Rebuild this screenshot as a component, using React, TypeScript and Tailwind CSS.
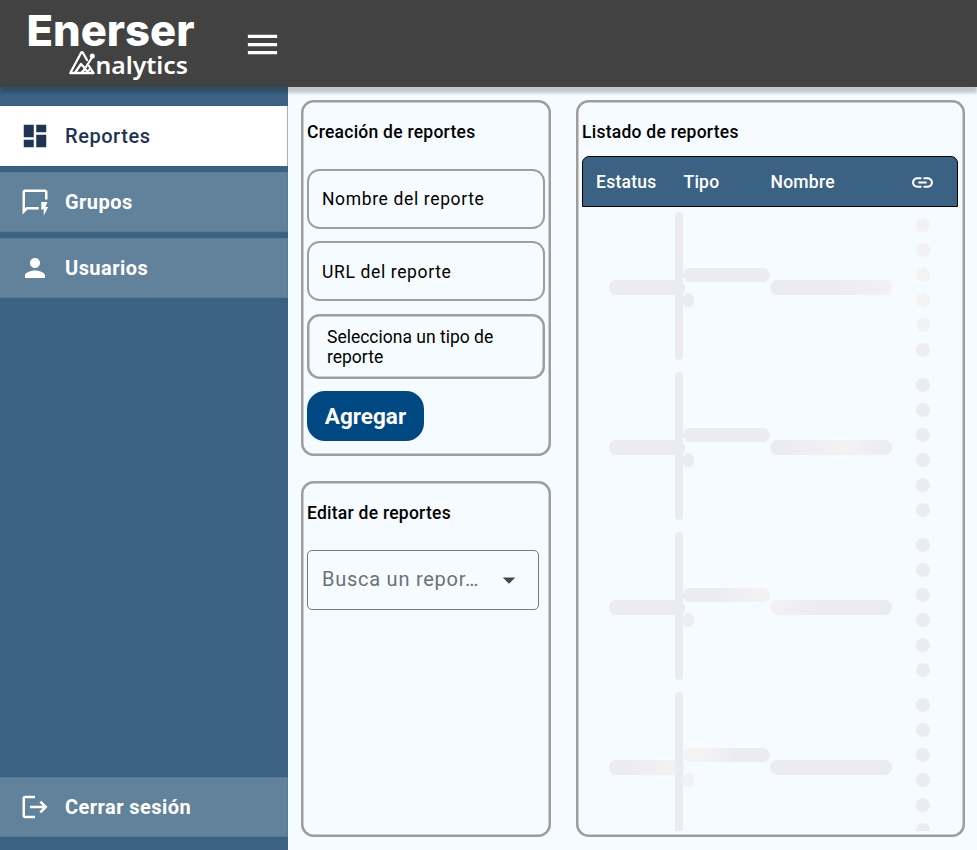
import type { ReactNode } from 'react';
import {
  MdArrowDropDown,
  MdDashboard,
  MdLink,
  MdLogout,
  MdMenu,
  MdOutlineQuickreply,
  MdPerson,
} from 'react-icons/md';

function Logo() {
  return (
    <svg width="180" height="87" viewBox="0 0 180 87" fill="#fff" className="overflow-visible">
      <text x="1.500" y="45.500" fontFamily="Inter, sans-serif" fontWeight="800" fontSize="43" textLength="168" lengthAdjust="spacingAndGlyphs">
        Enerser
      </text>
      <g fill="none" stroke="#fff" strokeWidth="2.300" strokeLinejoin="round" strokeLinecap="round">
        <path d="M68.500 73H45.300L56 53q1-1.500 2 0l4 7M64 66l4.500 7" />
        <path d="M50.500 72l5.500-8 4 4.500 7-11M57 72l3-3 2.500 2.500 2-2" />
      </g>
      <circle cx="67.300" cy="56" r="2.500" />
      <text x="70.500" y="73.500" fontFamily="'Noto Sans', sans-serif" fontWeight="600" fontSize="24" textLength="92.500" lengthAdjust="spacingAndGlyphs">
        nalytics
      </text>
    </svg>
  );
}

function NavItem({ icon, label, active = false }: { icon: ReactNode; label: string; active?: boolean }) {
  return (
    <div
      className={
        active
          ? 'flex h-[60px] items-center gap-[15px] border-r border-[#9fb1c0] bg-white pl-5 text-[20px] font-medium tracking-[0.55px] text-[#1f3354]'
          : 'flex h-[60px] items-center gap-[15px] border border-l-0 border-[#577b95] bg-[#62829b] pl-5 text-[20px] font-bold tracking-[0.45px] text-white'
      }
    >
      {icon}
      <span>{label}</span>
    </div>
  );
}

const CARD = 'rounded-[12.5px] shadow-[inset_0_0_0_2.5px_#9e9e9e]';
const HEADING = 'text-[17.5px] font-medium leading-[26px] tracking-[0.25px]';
const INPUT = 'flex h-[60px] items-center rounded-[12.5px] border-2 border-[#9e9e9e] pl-[13px] text-[17.5px] tracking-[0.64px]';

interface RowTone {
  status: string;
  line: string;
  type: string;
  small: string;
  name: string;
  dots: string[];
}

const BASE = 'bg-[#ebebf3]';
const WARM = 'bg-[#f2f1f3]';

const rows: RowTone[] = [
  { status: BASE, line: 'bg-[#ecebf0]', type: BASE, small: BASE, name: 'bg-linear-to-r from-[#ebebf4] from-50% to-[#f3f0f4]', dots: [WARM, WARM, 'bg-[#f4f3f3]', 'bg-[#f4f3f3]', WARM, 'bg-[#eeedf2]'] },
  { status: BASE, line: BASE, type: BASE, small: BASE, name: 'bg-linear-to-r from-[#ebebf4] from-10% via-[#f3f2f3] via-60% to-[#ebebf4]', dots: [BASE, BASE, BASE, BASE, BASE, BASE] },
  { status: BASE, line: BASE, type: 'bg-linear-to-r from-[#ebebf4] from-35% to-[#f4f3f3]', small: 'bg-[#eeedf3]', name: 'bg-linear-to-r from-[#f3f2f3] to-[#ebebf4] to-40%', dots: [BASE, BASE, BASE, BASE, BASE, BASE] },
  { status: 'bg-linear-to-r from-[#ebebf3] from-20% to-[#f4f3f3]', line: BASE, type: 'bg-linear-to-r from-[#f4f3f3] from-20% to-[#ebebf4] to-60%', small: 'bg-[#f2f1f3]', name: BASE, dots: [BASE, BASE, BASE, BASE, BASE, BASE] },
];

function SkeletonRow({ tone }: { tone: RowTone }) {
  return (
    <div className="flex h-[160px] shrink-0 items-start pl-[27px]">
      <div className={`mt-[73px] h-[15px] w-[76px] rounded-full ${tone.status}`} />
      <div className={`-ml-[10px] mt-[5px] h-[148px] w-2 rounded-full ${tone.line}`} />
      <div className="mt-[61px] flex w-[87px] flex-col gap-[11px]">
        <div className={`h-[14px] rounded-full ${tone.type}`} />
        <div className={`h-[14px] w-[10.5px] rounded-full ${tone.small}`} />
      </div>
      <div className={`mt-[73px] h-[15px] w-[122px] rounded-full ${tone.name}`} />
      <div className="ml-6 mt-[11px] flex flex-col gap-[11px]">
        {tone.dots.map((dot, i) => (
          <div key={i} className={`size-[14px] rounded-full ${dot}`} />
        ))}
      </div>
    </div>
  );
}

export default function App() {
  return (
    <div className="flex h-[850px] w-[977px] flex-col overflow-hidden bg-[#f6fbff] font-['Roboto',sans-serif] text-black">
      <header className="z-10 flex h-[87px] shrink-0 items-center bg-[#424242] shadow-[0_6px_3px_rgba(0,0,0,0.2)]">
        <div className="ml-[25px] w-[180px]">
          <Logo />
        </div>
        <MdMenu size={39} className="ml-[38px] mt-px text-white" />
      </header>

      <div className="flex min-h-0 flex-1">
        <nav className="flex w-[288px] shrink-0 flex-col gap-1.5 bg-[#3b6282] pb-[13px] pt-[19px]">
          <NavItem active icon={<MdDashboard size={30} />} label="Reportes" />
          <NavItem icon={<MdOutlineQuickreply size={30} />} label="Grupos" />
          <NavItem icon={<MdPerson size={30} />} label="Usuarios" />
          <div className="mt-auto">
            <NavItem icon={<MdLogout size={30} />} label="Cerrar sesión" />
          </div>
        </nav>

        <main className="flex flex-1 gap-[25px] pb-[13px] pl-[13px] pr-[12.5px] pt-[13px]">
          <div className="flex w-[250px] flex-col gap-[25px]">
            <section className={`flex h-[356px] flex-col px-1.5 pt-[19px] ${CARD}`}>
              <h2 className={HEADING}>Creación de reportes</h2>
              <div className={`mt-6 ${INPUT}`}>Nombre del reporte</div>
              <div className={`mt-3 pt-0.5 ${INPUT}`}>URL del reporte</div>
              <div className="mt-[13px] flex h-[65px] items-center rounded-[12.5px] px-5 text-[17.5px] leading-5 shadow-[inset_0_0_0_2.5px_#9e9e9e]">
                Selecciona un tipo de reporte
              </div>
              <button className="mt-3 h-[50px] w-[117px] rounded-[18px] bg-[#004881] pt-0.5 text-[22.5px] font-bold text-white">
                Agregar
              </button>
            </section>

            <section className={`flex flex-1 flex-col px-1.5 pt-[19px] ${CARD}`}>
              <h2 className={HEADING}>Editar de reportes</h2>
              <div className="mt-6 flex h-[60px] w-[232px] items-center justify-between rounded-[5px] border border-[#6f797f] pl-[14px] pr-[14px] text-[20px] tracking-[0.75px] text-[#6c7277]">
                <span className="whitespace-nowrap pb-0.5">Busca un repor…</span>
                <MdArrowDropDown size={30} className="text-[#40484d]" />
              </div>
            </section>
          </div>

          <section className={`flex flex-1 flex-col overflow-hidden px-[6px] pb-[6px] pt-[19px] ${CARD}`}>
            <h2 className={HEADING}>Listado de reportes</h2>
            <div className="mt-[11px] flex h-[51px] w-[376px] shrink-0 items-center rounded-t-[7px] border border-black bg-[#3b6282] pl-[13px] pt-px text-[17.5px] font-medium tracking-[0.25px] text-white">
              <span className="w-[87.5px]">Estatus</span>
              <span className="w-[87px]">Tipo</span>
              <span className="w-[139.5px]">Nombre</span>
              <MdLink size={25} />
            </div>
            <div className="flex min-h-0 flex-1 flex-col overflow-hidden">
              {rows.map((tone, i) => (
                <SkeletonRow key={i} tone={tone} />
              ))}
            </div>
          </section>
        </main>
      </div>
    </div>
  );
}
